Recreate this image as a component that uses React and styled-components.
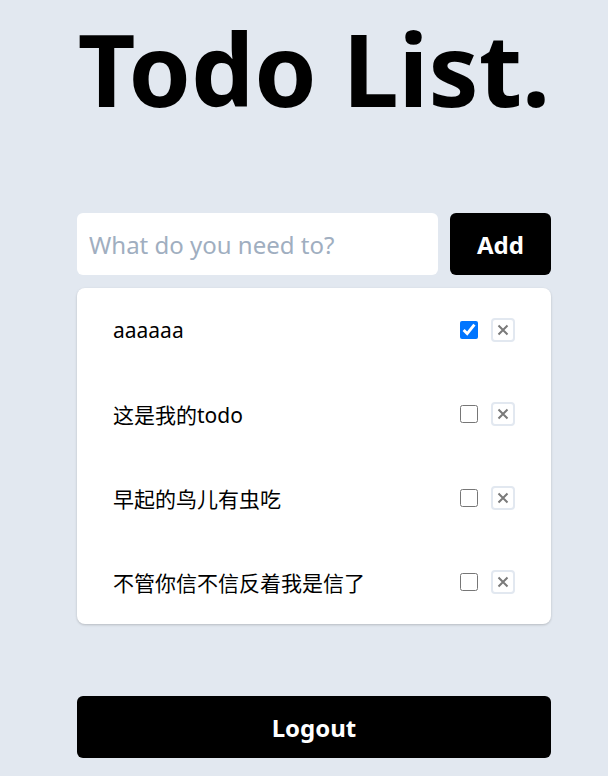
import React, { useState } from "react";
import styled, { createGlobalStyle } from "styled-components";

const Global = createGlobalStyle`
  html, body { margin: 0; padding: 0; background: #e2e8f0; }
  body { font-family: "Noto Sans", "Noto Sans CJK SC", sans-serif; }
  * { box-sizing: border-box; }
`;

const Page = styled.div`
  min-height: 776px;
  display: flex;
  justify-content: center;
  padding-left: 20px;
`;

const Container = styled.div`
  width: 474px;
  display: flex;
  flex-direction: column;
`;

const Title = styled.h1`
  margin: 0;
  font-size: 100px;
  line-height: 136px;
  font-weight: 700;
  text-align: center;
  color: #000;
`;

const Form = styled.form`
  display: flex;
  gap: 12px;
  margin-top: 77px;
`;

const Input = styled.input`
  flex: 1;
  min-width: 0;
  height: 62px;
  border: none;
  border-radius: 6px;
  background: #fff;
  padding: 0 12px;
  font-family: inherit;
  font-size: 24px;
  color: #000;
  outline: none;
  &::placeholder { color: #a0aec0; }
`;

const Button = styled.button`
  flex-shrink: 0;
  height: 62px;
  width: ${(p) => (p.$full ? "100%" : "101px")};
  border: none;
  border-radius: 6px;
  background: #000;
  color: #fff;
  font-family: inherit;
  font-size: 24px;
  font-weight: 700;
  cursor: pointer;
`;

const Card = styled.ul`
  list-style: none;
  margin: 13px 0 0;
  padding: 0;
  background: #fff;
  border-radius: 8px;
  box-shadow: 0 1px 3px rgba(0, 0, 0, 0.12), 0 1px 2px rgba(0, 0, 0, 0.08);
`;

const Row = styled.li`
  height: 84px;
  display: flex;
  align-items: center;
  padding: 0 36px;
`;

const Text = styled.span`
  flex: 1;
  font-size: 21px;
  color: #000;
`;

const Check = styled.input`
  width: 18px;
  height: 18px;
  margin: 0 13px 0 0;
`;

const Delete = styled.button`
  width: 24px;
  height: 24px;
  padding: 0;
  border: 2px solid #e2e8f0;
  border-radius: 4px;
  background: #fff;
  display: flex;
  align-items: center;
  justify-content: center;
  cursor: pointer;
`;

const Footer = styled.div`
  margin-top: 72px;
`;

const initial = [
  { text: "aaaaaa", done: true },
  { text: "这是我的todo", done: false },
  { text: "早起的鸟儿有虫吃", done: false },
  { text: "不管你信不信反着我是信了", done: false },
];

export default function App() {
  const [todos, setTodos] = useState(initial);
  return (
    <>
      <Global />
      <Page>
        <Container>
          <Title>Todo List.</Title>
          <Form onSubmit={(e) => e.preventDefault()}>
            <Input placeholder="What do you need to?" />
            <Button type="submit">Add</Button>
          </Form>
          <Card>
            {todos.map((t, i) => (
              <Row key={i}>
                <Text>{t.text}</Text>
                <Check
                  type="checkbox"
                  checked={t.done}
                  onChange={() =>
                    setTodos(todos.map((x, j) => (j === i ? { ...x, done: !x.done } : x)))
                  }
                />
                <Delete aria-label="delete">
                  <svg width="12" height="12" viewBox="0 0 12 12">
                    <path d="M1.5 1.5 L10.5 10.5 M10.5 1.5 L1.5 10.5" stroke="#7a7a7a" strokeWidth="2" />
                  </svg>
                </Delete>
              </Row>
            ))}
          </Card>
          <Footer>
            <Button $full>Logout</Button>
          </Footer>
        </Container>
      </Page>
    </>
  );
}
